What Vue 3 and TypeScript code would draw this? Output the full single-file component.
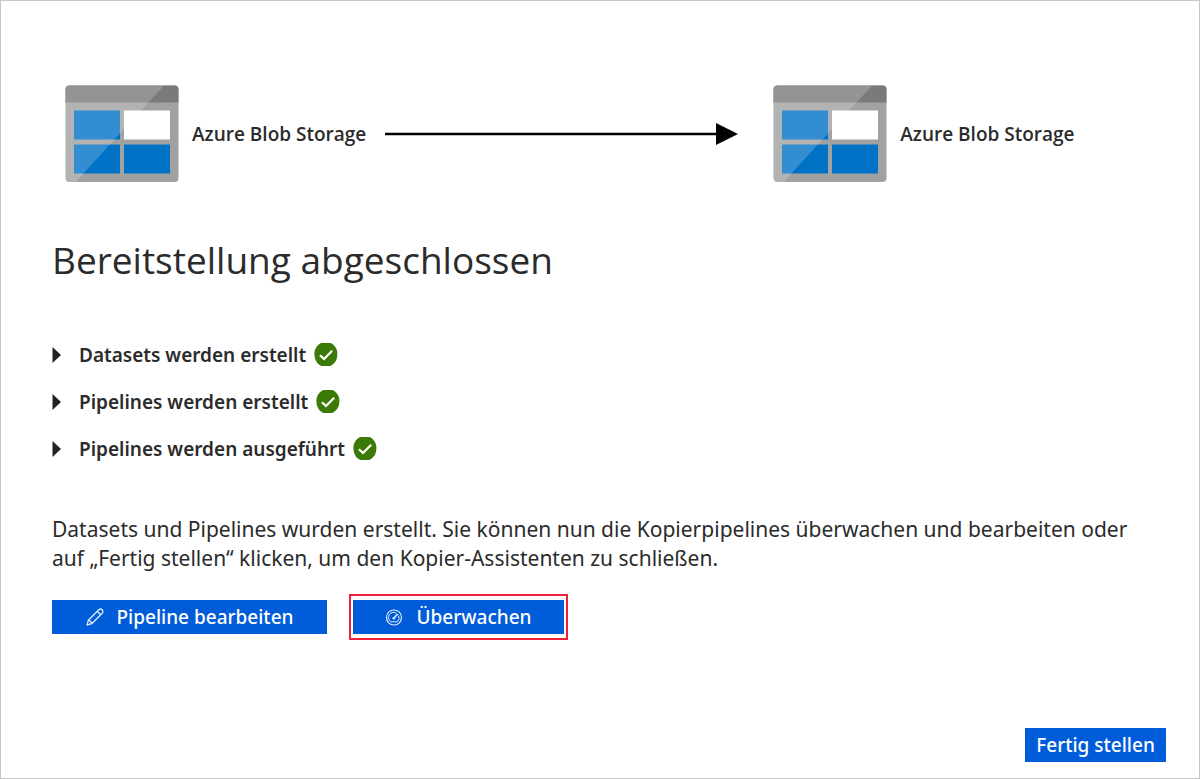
<script setup lang="ts">
interface Step {
  id: string
  label: string
}

const steps: Step[] = [
  { id: 'datasets', label: 'Datasets werden erstellt' },
  { id: 'pipelines', label: 'Pipelines werden erstellt' },
  { id: 'run', label: 'Pipelines werden ausgeführt' },
]

const endpoints: string[] = ['Azure Blob Storage', 'Azure Blob Storage']
</script>

<template>
  <main class="page">
    <section class="flow">
      <template v-for="(name, index) in endpoints" :key="index">
        <svg v-if="index > 0" class="arrow" viewBox="0 0 354 24" aria-hidden="true">
          <path d="M0 12H332" stroke="#000" stroke-width="2.4" />
          <path d="M331 1L353 12L331 23Z" fill="#000" />
        </svg>
        <div class="endpoint">
          <svg class="storage" viewBox="0 0 114 98" aria-hidden="true">
            <rect x="0.5" y="0.5" width="113" height="96.500" rx="4" fill="#a0a1a2" />
            <path d="M0.5 17.5V4.5a4 4 0 0 1 4-4h105a4 4 0 0 1 4 4v13z" fill="#7a7a7a" />
            <rect x="9" y="25.500" width="46" height="29" fill="#0072c6" />
            <rect x="9" y="59.500" width="46" height="29" fill="#0072c6" />
            <rect x="59" y="59.500" width="46" height="29" fill="#0072c6" />
            <path d="M4.500 0.500H99L10.500 97H4.500a4 4 0 0 1-4-4V4.500a4 4 0 0 1 4-4z" fill="#fff" fill-opacity="0.2" />
            <rect x="59" y="25.500" width="46" height="29" fill="#fff" />
          </svg>
          <span class="endpoint-name">{{ name }}</span>
        </div>
      </template>
    </section>

    <h1 class="title">Bereitstellung abgeschlossen</h1>

    <ul class="steps">
      <li v-for="step in steps" :key="step.id">
        <button type="button" class="step" aria-expanded="false">
          <svg class="caret" viewBox="0 0 10 16" aria-hidden="true">
            <path d="M0.500 0L9 8L0.500 16Z" fill="#222" />
          </svg>
          <span class="step-label">{{ step.label }}</span>
          <svg class="check" viewBox="0 0 24 24" aria-hidden="true">
            <path d="M7.500 23H16C21 21 23.300 16.500 23.300 12A11.500 11.500 0 1 0 0.500 12C0.500 17 3.500 21.500 7.500 23Z" fill="#3b7a06" />
            <path d="M6 12.200L10 16L18.200 7.800" fill="none" stroke="#fff" stroke-width="2.200" />
          </svg>
        </button>
      </li>
    </ul>

    <p class="message">
      Datasets und Pipelines wurden erstellt. Sie können nun die Kopierpipelines überwachen und bearbeiten oder auf „Fertig stellen“ klicken, um den Kopier-Assistenten zu schließen.
    </p>

    <div class="actions">
      <button type="button" class="button edit">
        <svg class="icon" viewBox="0 0 18 18" fill="none" stroke="#dcebff" stroke-width="1.300" stroke-linejoin="round" aria-hidden="true">
          <path d="M1 17L2.300 12.300L12.800 1.800A2.200 2.200 0 0 1 16.200 5.200L5.700 15.700Z" />
          <path d="M2.300 12.300Q5 12.700 5.700 15.700M11.300 3.300L14.700 6.700" />
        </svg>
        Pipeline bearbeiten
      </button>
      <div class="highlight">
        <button type="button" class="button monitor">
          <svg class="icon" viewBox="0 0 18 18" fill="none" stroke="#dcebff" aria-hidden="true">
            <circle cx="9" cy="9.500" r="7.500" stroke-width="1.200" />
            <path d="M5.800 13.800A5 5 0 0 1 11.500 5.200M13.500 7.500A5 5 0 0 1 12.200 13.800M5.800 13.800H12.200" stroke-width="1" />
            <path d="M9 10L12.500 6" stroke-width="1.600" />
            <circle cx="8.800" cy="10.200" r="1.300" fill="#dcebff" stroke="none" />
          </svg>
          Überwachen
        </button>
      </div>
    </div>

    <footer class="footer">
      <button type="button" class="button finish">Fertig stellen</button>
    </footer>
  </main>
</template>

<style>
body {
  margin: 0;
}
</style>

<style scoped>
.page {
  box-sizing: border-box;
  min-height: 100vh;
  display: flex;
  flex-direction: column;
  padding: 84px 33px 16px 51px;
  border: 1px solid #c8c8c8;
  background: #fff;
  color: #2b2b2b;
  font-family: "Noto Sans", "Open Sans", sans-serif;
  font-size: 20px;
}

.flow {
  display: flex;
  align-items: center;
  gap: 19px;
  padding-left: 13px;
}

.endpoint {
  display: flex;
  align-items: center;
  gap: 13px;
}

.storage {
  width: 114px;
  height: 98px;
}

.endpoint-name {
  font-family: "Open Sans", "Noto Sans", sans-serif;
  font-size: 19px;
  line-height: 28px;
  font-weight: 600;
  white-space: nowrap;
}

.arrow {
  width: 354px;
  height: 24px;
  margin-right: 15px;
}

.title {
  margin: 49px 0 0;
  font-family: "Open Sans", "Noto Sans", sans-serif;
  font-size: 37px;
  line-height: 56px;
  font-weight: 400;
}

.steps {
  display: flex;
  flex-direction: column;
  gap: 19px;
  margin: 53px 0 0;
  padding: 0;
  list-style: none;
}

.step {
  display: flex;
  align-items: center;
  padding: 0;
  border: 0;
  background: none;
  color: inherit;
  font: inherit;
  font-size: 19px;
  font-weight: 600;
  line-height: 28px;
}

.caret {
  width: 10px;
  height: 16px;
  margin-right: 17px;
}

.check {
  width: 24px;
  height: 24px;
  margin-left: 8px;
}

.message {
  margin: 52px 0 0;
  padding-right: 24px;
  font-size: 21px;
  line-height: 29px;
}

.actions {
  display: flex;
  align-items: center;
  gap: 22px;
  margin-top: 21px;
}

.button {
  display: flex;
  align-items: center;
  justify-content: center;
  gap: 13px;
  box-sizing: border-box;
  height: 34px;
  padding: 0 12px;
  border: 0;
  background: #015cda;
  color: #fff;
  font: inherit;
  font-size: 19px;
  font-weight: 500;
  line-height: 28px;
  white-space: nowrap;
}

.edit {
  width: 275px;
}

.monitor {
  width: 211px;
}

.icon {
  width: 18px;
  height: 18px;
}

.highlight {
  padding: 4px 2px;
  border: 2px solid #f01f3c;
}

.footer {
  display: flex;
  justify-content: flex-end;
  margin-top: auto;
}

.finish {
  width: 141px;
}
</style>
